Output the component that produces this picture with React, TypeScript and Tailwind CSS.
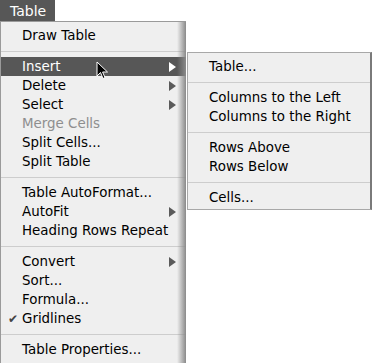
type Item = { label?: string; sep?: boolean; sub?: boolean; disabled?: boolean; active?: boolean; checked?: boolean }

const mainItems: Item[] = [
  { label: 'Draw Table' },
  { sep: true },
  { label: 'Insert', sub: true, active: true },
  { label: 'Delete', sub: true },
  { label: 'Select', sub: true },
  { label: 'Merge Cells', disabled: true },
  { label: 'Split Cells...' },
  { label: 'Split Table' },
  { sep: true },
  { label: 'Table AutoFormat...' },
  { label: 'AutoFit', sub: true },
  { label: 'Heading Rows Repeat' },
  { sep: true },
  { label: 'Convert', sub: true },
  { label: 'Sort...' },
  { label: 'Formula...' },
  { label: 'Gridlines', checked: true },
  { sep: true },
  { label: 'Table Properties...' },
]

const subItems: Item[] = [
  { label: 'Table...' },
  { sep: true },
  { label: 'Columns to the Left' },
  { label: 'Columns to the Right' },
  { sep: true },
  { label: 'Rows Above' },
  { label: 'Rows Below' },
  { sep: true },
  { label: 'Cells...' },
]

function Arrow({ light }: { light?: boolean }) {
  return (
    <svg width="7" height="10" viewBox="0 0 7 10" className="ml-auto mr-[10px]">
      <path d="M0 0 L7 5 L0 10 Z" fill={light ? '#ffffff' : '#5a5a5a'} />
    </svg>
  )
}

function MenuRows({ items }: { items: Item[] }) {
  return (
    <>
      {items.map((it, i) =>
        it.sep ? (
          <div key={i} className="h-[12px] flex items-center">
            <div className="w-full h-px bg-[#cdcdcd]" />
          </div>
        ) : (
          <div
            key={i}
            className={`h-[19px] flex items-center ${
              it.active ? 'bg-[#575757] text-white' : it.disabled ? 'text-[#8e8e8e]' : 'text-black'
            }`}
          >
            <span className="w-[21px] pl-[7px] text-[12px] text-[#444]">{it.checked ? '✔' : ''}</span>
            <span>{it.label}</span>
            {it.sub && <Arrow light={it.active} />}
          </div>
        )
      )}
    </>
  )
}

export default function App() {
  return (
    <div
      className="relative w-[372px] h-[363px] bg-white overflow-hidden text-[13.4px] leading-none"
      style={{ fontFamily: '"DejaVu Sans", "Liberation Sans", sans-serif' }}
    >
      {/* menu title */}
      <div className="h-[21px] w-[55px] bg-[#575757] text-white text-[14px] flex items-center pl-[10px]">
        Table
      </div>

      {/* main menu */}
      <div className="relative w-[186px] h-[342px] bg-[#efefef] border-t border-l border-[#9a9a9a] pt-[4px]">
        <MenuRows items={mainItems} />
        <div className="absolute right-0 top-0 bottom-0 w-[9px] bg-gradient-to-r from-transparent to-[#8a8a8a]" />
      </div>

      {/* insert submenu */}
      <div className="absolute left-[187px] top-[52px] w-[185px] h-[158px] bg-[#efefef] border border-[#a8a8a8] border-r-2 border-r-[#7a7a7a] pt-[4px]">
        <MenuRows items={subItems} />
      </div>

      {/* mouse pointer */}
      <svg width="14" height="20" viewBox="0 0 14 20" className="absolute left-[96px] top-[61px]">
        <path d="M1 1 L1 15 L4.5 11.5 L7 17.5 L9 16.6 L6.6 11 L11.5 11 Z" fill="#000" stroke="#fff" strokeWidth="1" />
      </svg>
    </div>
  )
}
